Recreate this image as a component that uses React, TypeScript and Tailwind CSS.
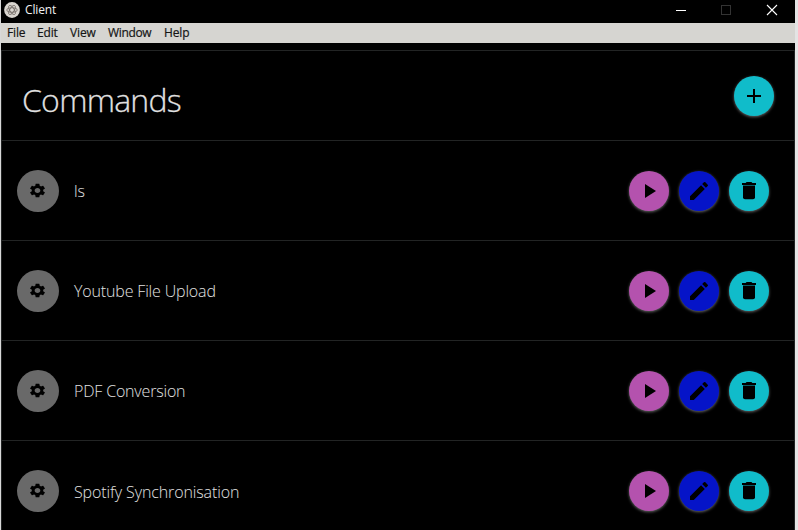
import React from "react";
import { MdAdd, MdCreate, MdPlayArrow, MdSettings } from "react-icons/md";

const menus = [
  { label: "File", cls: "w-[30px]" },
  { label: "Edit", cls: "w-[33px]" },
  { label: "View", cls: "w-[38px]" },
  { label: "Window", cls: "w-[56px] tracking-[-0.35px]" },
  { label: "Help", cls: "w-[30px]" },
];

const commands = [
  { name: "ls", cls: "pt-[1px]" },
  { name: "Youtube File Upload", cls: "pt-[1px] tracking-[-0.16px]" },
  { name: "PDF Conversion", cls: "pt-[1px] tracking-[-0.18px]" },
  { name: "Spotify Synchronisation", cls: "pt-[2px] tracking-[-0.11px]" },
];

const fab =
  "flex size-10 shrink-0 items-center justify-center rounded-full text-black shadow-[0_1px_3px_rgba(255,255,255,0.4)]";

function AppLogo() {
  return (
    <svg viewBox="0 0 16 16" className="size-4 shrink-0" fill="none">
      <circle cx="8" cy="8" r="7.9" fill="#d9d5cf" />
      <g stroke="#655d58" strokeWidth="0.7">
        <ellipse cx="8" cy="8" rx="5.2" ry="2.2" />
        <ellipse cx="8" cy="8" rx="5.2" ry="2.2" transform="rotate(60 8 8)" />
        <ellipse cx="8" cy="8" rx="5.2" ry="2.2" transform="rotate(120 8 8)" />
      </g>
    </svg>
  );
}

function TrashIcon() {
  return (
    <svg viewBox="0 0 24 24" className="size-6" fill="currentColor">
      <path d="M5 4.1h3.6l1-1h4.8l1 1H19v1.8H5z" />
      <path d="M6 6.5h12v11.8a2 2 0 0 1-2 2H8a2 2 0 0 1-2-2z" />
    </svg>
  );
}

function TitleBar() {
  return (
    <header className="flex h-[23px] shrink-0 items-start justify-between bg-black pl-[3px]">
      <div className="flex items-center gap-[5px] pt-[2px]">
        <AppLogo />
        <span className="text-[12px] leading-4 tracking-[-0.15px] text-[#f2f2f2]">Client</span>
      </div>
      <svg viewBox="0 0 120 20" className="mr-px h-5 w-[120px]" fill="none" shapeRendering="crispEdges">
        <path d="M2 10.5h10" stroke="#fff" />
        <rect x="47.5" y="5.5" width="9" height="9" stroke="#333" />
        <path d="M93 5l10 10M103 5l-10 10" stroke="#fff" strokeWidth="1.1" shapeRendering="auto" />
      </svg>
    </header>
  );
}

export default function App() {
  return (
    <div className="flex h-[530px] w-[798px] overflow-hidden border-l border-r-[3px] border-l-[#d8d8d8] border-r-[#e4e4e4] bg-black font-['Open_Sans','Noto_Sans',sans-serif]">
      <div className="flex min-w-0 flex-1 flex-col">
        <TitleBar />
        <nav className="flex h-5 shrink-0 items-center bg-[#d6d5d1] pl-[6px] text-[12px] leading-5 tracking-[-0.15px] text-[#151515] [-webkit-text-stroke:0.2px_#151515]">
          {menus.map((m) => (
            <span key={m.label} className={m.cls}>
              {m.label}
            </span>
          ))}
        </nav>
        <main className="mt-[7px] flex flex-1 flex-col border-x border-t border-[#222424] font-light text-[#e2e2e2]">
          <div className="flex h-[90px] shrink-0 items-start justify-between border-b border-[#222424] pr-5 pl-5">
            <h1 className="pt-[26px] text-[32px] leading-[46px] tracking-[-0.75px] [-webkit-text-stroke:0.3px_#dcdcdc]">Commands</h1>
            <button className={`${fab} mt-[25px] bg-[#10bcca]`}>
              <MdAdd size={24} />
            </button>
          </div>
          {commands.map((c) => (
            <div key={c.name} className="flex h-[100px] shrink-0 items-center border-b border-[#222424] pr-[25px] pl-[15px]">
              <div className="flex size-[42px] items-center justify-center rounded-full bg-[#696969] text-black">
                <MdSettings className="mr-px h-[17px] w-[19px]" preserveAspectRatio="none" />
              </div>
              <span className={`ml-[15px] flex-1 text-[16px] leading-6 ${c.cls}`}>{c.name}</span>
              <div className="flex gap-[10px]">
                <button className={`${fab} bg-[#b452ae]`}>
                  <MdPlayArrow size={24} />
                </button>
                <button className={`${fab} bg-[#0514c8]`}>
                  <MdCreate size={24} />
                </button>
                <button className={`${fab} bg-[#10bcca]`}>
                  <TrashIcon />
                </button>
              </div>
            </div>
          ))}
        </main>
      </div>
    </div>
  );
}
